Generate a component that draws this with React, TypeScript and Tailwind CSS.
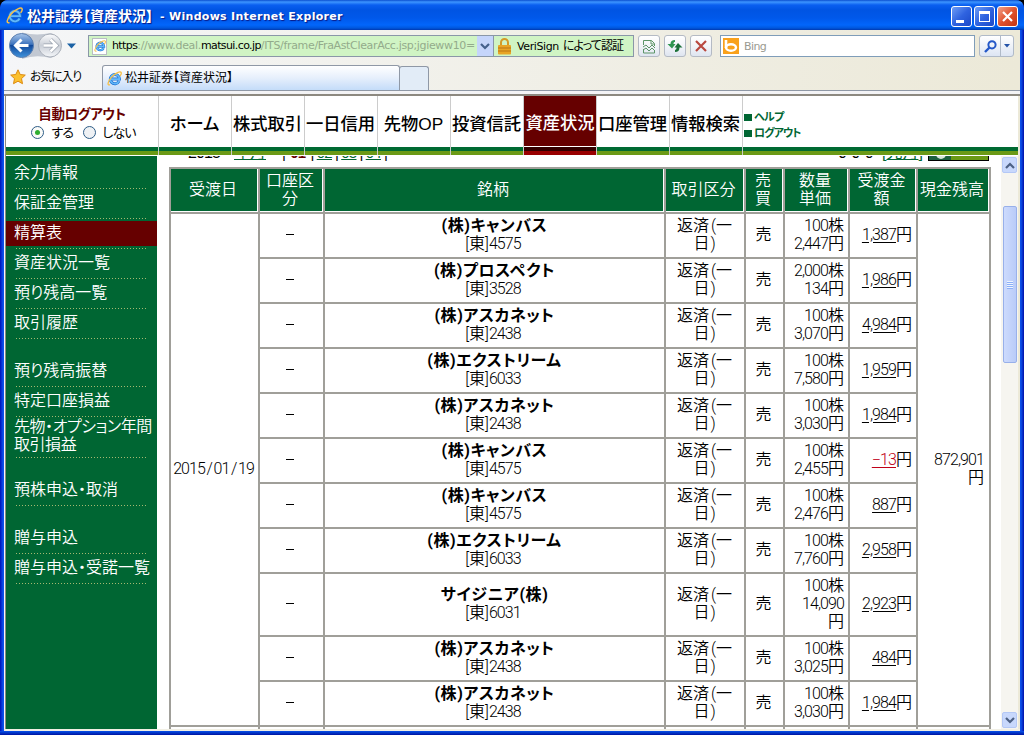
import { useState } from "react"

type Row = {
    name: string;
    code: string;
    qty: string;
    price: string;
    amount: string;
}

const rows: Row[] = [
    { name: "(株)キャンバス", code: "4575", qty: "100", price: "2,447", amount: "1,387" },
    { name: "(株)プロスペクト", code: "3528", qty: "2,000", price: "134", amount: "1,986" },
    { name: "(株)アスカネット", code: "2438", qty: "100", price: "3,070", amount: "4,984" },
    { name: "(株)エクストリーム", code: "6033", qty: "100", price: "7,580", amount: "1,959" },
    { name: "(株)アスカネット", code: "2438", qty: "100", price: "3,030", amount: "1,984" },
    { name: "(株)キャンバス", code: "4575", qty: "100", price: "2,455", amount: "−13" },
    { name: "(株)キャンバス", code: "4575", qty: "100", price: "2,476", amount: "887" },
    { name: "(株)エクストリーム", code: "6033", qty: "100", price: "7,760", amount: "2,958" },
    { name: "サイジニア(株)", code: "6031", qty: "100", price: "14,090", amount: "2,923" },
    { name: "(株)アスカネット", code: "2438", qty: "100", price: "3,025", amount: "484" },
    { name: "(株)アスカネット", code: "2438", qty: "100", price: "3,030", amount: "1,984" },
];

const menuGroups = [
    ["余力情報", "保証金管理", "精算表", "資産状況一覧", "預り残高一覧", "取引履歴"],
    ["預り残高振替", "特定口座損益", "先物・オプション年間\n取引損益"],
    ["預株申込・取消"],
    ["贈与申込", "贈与申込・受諾一覧"],
];

const navItems = ["ホーム", "株式取引", "一日信用", "先物OP", "投資信託", "資産状況", "口座管理", "情報検索"];

const Num = ({ children }: { children: string }) => (
    <span className="tracking-[-0.9px]">{children}</span>
)

const IeLogo = ({ size }: { size: number }) => (
    <svg width={size} height={size} viewBox="0 0 16 16" className="shrink-0">
        <path d="M12.8 10.8A4.9 4.9 0 1 1 13.300 8.600H4" fill="none" stroke="#1c6fd0" strokeWidth="3.200" />
        <path d="M12.8 10.8A4.9 4.9 0 1 1 13.300 8.600H4" fill="none" stroke="#62b8fa" strokeWidth="1.800" />
        <path d="M3.3 14.6C0 16 .6 11.400 4.600 6.800 8.800 2.200 14.500-.5 15.200 1.800c.3 1-.4 2.400-1.400 3.700" fill="none" stroke="#f5c04a" strokeWidth="1.400" />
    </svg>
)

const TitleBar = () => (
    <div className="h-[30px] shrink-0 flex items-center pl-[6px] pr-[6px] rounded-t-[7px] bg-[linear-gradient(#0b4fd0_0,#3d95ff_2px,#0a5ff0_5px,#0054e3_10px,#0058ea_18px,#0266fb_25px,#0057dd_28px,#0038b0_30px)]">
        <IeLogo size={17} />
        <div className="ml-1 pt-0.5 text-white font-bold leading-none whitespace-pre [text-shadow:1px_1px_1px_#0a1883] flex items-center">
            <span className="text-[14px] tracking-[0px]">松井証券【資産状況】</span>
            <span className="ml-[7px] tracking-[0.3px] text-[11px] font-['DejaVu_Sans']">- Windows Internet Explorer</span>
        </div>
        <div className="ml-auto flex gap-[2px] pt-[2px]">
            <div className="w-[21px] h-[21px] border border-white rounded-[3px] bg-linear-to-br from-[#6f9cf5] via-[#2f63e0] to-[#1b48c8] flex items-end pl-1 pb-[3px]">
                <div className="w-[8px] h-[3px] bg-white"></div>
            </div>
            <div className="w-[21px] h-[21px] border border-white rounded-[3px] bg-linear-to-br from-[#6f9cf5] via-[#2f63e0] to-[#1b48c8] flex items-center justify-center">
                <div className="w-[11px] h-[11px] border border-t-[3px] border-white"></div>
            </div>
            <div className="w-[21px] h-[21px] border border-white rounded-[3px] bg-linear-to-br from-[#f0a088] via-[#e0522c] to-[#c23410] flex items-center justify-center">
                <svg width="13" height="13" viewBox="0 0 13 13"><path d="M2 2l9 9M11 2l-9 9" stroke="#fff" strokeWidth="2.2" /></svg>
            </div>
        </div>
    </div>
)

const ToolButton = ({ children }: { children: React.ReactNode }) => (
    <div className="w-[22px] h-[22px] shrink-0 border border-[#b4bac4] rounded-[3px] bg-linear-to-b from-white via-[#f2f4f9] to-[#dfe5f0] flex items-center justify-center">{children}</div>
)

const NavButtons = () => (
    <svg width="76" height="30" viewBox="0 0 76 30" className="shrink-0">
        <defs>
            <linearGradient id="back" x1="0" y1="0" x2="0" y2="1">
                <stop offset="0" stopColor="#a9c6ea" />
                <stop offset=".45" stopColor="#3d73bd" />
                <stop offset=".5" stopColor="#124a9c" />
                <stop offset="1" stopColor="#3f93dc" />
            </linearGradient>
            <linearGradient id="fwd" x1="0" y1="0" x2="0" y2="1">
                <stop offset="0" stopColor="#fdfdfe" />
                <stop offset=".5" stopColor="#c9ced6" />
                <stop offset="1" stopColor="#f5f7fa" />
            </linearGradient>
        </defs>
        <path d="M17 1.500Q31 5 46 2a13 13 0 0 1 0 25Q31 23 17 28z" fill="#c2c8d2" />
        <circle cx="16.500" cy="14.500" r="12" fill="url(#back)" stroke="#5c7fb0" />
        <circle cx="45" cy="14.500" r="11.500" fill="url(#fwd)" stroke="#aab0ba" />
        <path d="M23.500 14.500H11M16.500 8.500l-6 6 6 6" fill="none" stroke="#fff" strokeWidth="3" />
        <path d="M38.500 14.500H51M45.500 8.500l6 6-6 6" fill="none" stroke="#9aa2ae" strokeWidth="4" />
        <path d="M38.500 14.500H51M45.500 8.500l6 6-6 6" fill="none" stroke="#fff" strokeWidth="2.600" />
        <path d="M62 12.500h9l-4.500 5z" fill="#1b62a5" />
    </svg>
)

const Toolbar = () => (
    <div className="h-[32px] shrink-0 flex items-center pl-[1px]">
        <NavButtons />
        <div className="ml-[7px] w-[389px] h-[22px] shrink-0 border border-r-0 border-[#8a97a8] bg-[#d0f4c4] flex items-center overflow-hidden">
            <div className="ml-[3px] mr-[5px] w-[15px] h-[17px] bg-white border border-[#b9bdc4] flex items-center justify-center shrink-0">
                <IeLogo size={12} />
            </div>
            <div className="whitespace-nowrap text-[11px] leading-[14px] text-[#93ab8b] font-['DejaVu_Sans'] tracking-[-0.34px]">
                <span className="text-black tracking-[-0.6px]">https</span>://www.deal.<span className="text-black tracking-[-0.6px]">matsui.co.jp</span>/ITS/frame/FraAstClearAcc.jsp;jgieww10=
            </div>
        </div>
        <div className="w-[16px] h-[22px] shrink-0 border-y border-[#8a97a8] bg-[#c5d5fb] flex items-center justify-center">
            <svg width="10" height="7" viewBox="0 0 10 7"><path d="M1 1l4 4 4-4" fill="none" stroke="#44608c" strokeWidth="2.200" /></svg>
        </div>
        <div className="w-[141px] h-[22px] shrink-0 border border-[#8a97a8] bg-[#d0f4c4] flex items-center pl-[4px]">
            <svg width="13" height="17" viewBox="0 0 13 17">
                <path d="M3 8V4.500a3.500 3.500 0 0 1 7 0V8" fill="none" stroke="#d39a28" strokeWidth="2" />
                <rect y="7" width="13" height="9.500" rx="1" fill="#e8a526" />
                <path d="M0 10h13M0 13h13" stroke="#bb7412" />
            </svg>
            <span className="ml-[6px] text-[12px] leading-none whitespace-nowrap"><span className="font-['DejaVu_Sans'] text-[11px] tracking-[-0.4px]">VeriSign</span><span className="ml-[4px] tracking-[-0.9px]">によって認証</span></span>
        </div>
        <div className="ml-1 flex gap-1">
            <ToolButton>
                <svg width="14" height="15" viewBox="0 0 14 15" fill="none" stroke="#5c9568">
                    <path d="M1.500 6V1.500h8l3 3V7M9 1.500V5h3M1.500 10v4h11v-3" />
                    <path d="M1 8l3-2 3 3 3-3 3 3M1 11l3-2 3 3 3-3 3 3" />
                </svg>
            </ToolButton>
            <ToolButton>
                <svg width="16" height="14" viewBox="0 0 16 14">
                    <path d="M8 1C5 1 3.500 2.500 3.500 5H.5l4.500 4.500L8.500 5h-2c0-1.500.3-2 1.500-2z" fill="#2f9550" />
                    <path d="M8 13c3 0 4.500-1.500 4.500-4.500h3L11 4 7.500 8.500h2c0 1.500-.3 2.300-1.500 2.300z" fill="#1b7038" />
                </svg>
            </ToolButton>
            <ToolButton>
                <svg width="12" height="12" viewBox="0 0 12 12"><path d="M1 1l10 10M11 1L1 11" stroke="#b94840" strokeWidth="2.200" /></svg>
            </ToolButton>
        </div>
        <div className="ml-[8px] w-[255px] h-[22px] shrink-0 border border-[#7f9db9] bg-white flex items-center pl-[2px]">
            <svg width="16" height="16" viewBox="0 0 16 16">
                <rect width="16" height="16" fill="#f9a11b" />
                <path d="M3 2v8" stroke="#fff" strokeWidth="2.600" />
                <ellipse cx="8" cy="9.500" rx="5" ry="3.200" fill="none" stroke="#fff" strokeWidth="2.400" />
            </svg>
            <span className="ml-[5px] text-[11px] leading-[13px] text-[#9a9a90] font-['DejaVu_Sans'] tracking-[-0.6px]">Bing</span>
        </div>
        <div className="ml-1 h-[22px] w-[35px] shrink-0 flex border border-[#b0bac8] rounded-[3px] bg-linear-to-b from-white to-[#dde5f3]">
            <div className="w-[21px] border-r border-[#b0bac8] flex items-center justify-center">
                <svg width="13" height="13" viewBox="0 0 13 13" fill="none" stroke="#2458c8" strokeWidth="2">
                    <circle cx="8" cy="4.800" r="3.600" />
                    <path d="M5.500 7.500L1 12" strokeWidth="2.400" />
                </svg>
            </div>
            <div className="flex-1 flex items-center justify-center">
                <svg width="6" height="4" viewBox="0 0 6 4"><path d="M0 0h6L3 3.500z" fill="#2352a8" /></svg>
            </div>
        </div>
    </div>
)

const TabBar = () => (
    <div className="h-[29px] shrink-0 flex items-end border-b border-[#8f98a6]">
        <div className="w-[98px] h-[27px] flex items-center pl-[6px]">
            <svg width="16" height="16" viewBox="0 0 16 16"><path d="M8 .8l2.200 4.700 5.100.6-3.800 3.500 1 5.100L8 12.200l-4.500 2.500 1-5.100L.7 6.100l5.100-.6z" fill="#fbc02e" stroke="#dc8a12" /></svg>
            <span className="ml-[4px] text-[12px] leading-none whitespace-nowrap tracking-[-1.2px]">お気に入り</span>
        </div>
        <div className="w-[298px] h-[25px] rounded-t-[3px] border border-b-0 border-[#8f98a6] bg-linear-to-b from-white via-[#e6effc] to-[#c4dcf9] flex items-center pl-1">
            <IeLogo size={15} />
            <span className="ml-[3px] text-[12px] leading-none whitespace-nowrap tracking-[0px]">松井証券【資産状況】</span>
        </div>
        <div className="w-[30px] h-[24px] -ml-px rounded-t-[3px] border border-b-0 border-[#8f98a6] bg-[#e2ecf7]"></div>
    </div>
)

const SiteHeader = ({ logout, setLogout }: { logout: boolean; setLogout: (v: boolean) => void }) => (
    <div className="h-[60px] shrink-0 flex border-b border-white bg-[linear-gradient(#fff_0_51px,#006a32_51px_55px,#6b9a16_55px_59px)]">
        <div className="w-[152px] shrink-0 flex flex-col items-center pt-[11px]">
            <div className="text-[13.5px] leading-[16px] font-bold text-[#660000] tracking-[-0.4px]">自動ログアウト</div>
            <div className="mt-px ml-[3px] flex items-center text-[13px] leading-[17px]">
                <span onClick={() => setLogout(true)} className="w-[13px] h-[13px] rounded-full border border-[#2d5c86] bg-[#fbfbf8] flex items-center justify-center">
                    {logout && <i className="w-[5px] h-[5px] rounded-full bg-[#2fae2f]"></i>}
                </span>
                <span className="ml-[7px] w-[32px] tracking-[-0.8px]">する</span>
                <span onClick={() => setLogout(false)} className="w-[13px] h-[13px] rounded-full border border-[#2d5c86] bg-[#eef1f4] flex items-center justify-center">
                    {!logout && <i className="w-[5px] h-[5px] rounded-full bg-[#2fae2f]"></i>}
                </span>
                <span className="ml-[6px] tracking-[-0.9px]">しない</span>
            </div>
        </div>
        {navItems.map((item) => (
            <div
                key={item}
                className={item === "資産状況"
                    ? "w-[73px] shrink-0 border-l border-[#ccc] text-white flex justify-center pt-[16px] bg-[linear-gradient(#660000_0_50px,#fff_50px_51px,#330000_51px_55px,#990000_55px_59px)]"
                    : "w-[73px] shrink-0 border-l border-[#ccc] flex justify-center pt-[17px] pr-px"}
            >
                <span className="text-[17.3px] leading-[22px] font-medium whitespace-nowrap">{item}</span>
            </div>
        ))}
        <div className="border-l border-[#ccc] pl-px pt-[13px] text-[11px] leading-[16px] font-bold text-[#006633]">
            <div className="flex items-center"><i className="w-2 h-[7px] bg-[#006633] mr-[2px]"></i><span className="tracking-[-0.7px]">ヘルプ</span></div>
            <div className="flex items-center"><i className="w-2 h-[7px] bg-[#006633] mr-[2px]"></i><span className="tracking-[-1px]">ログアウト</span></div>
        </div>
    </div>
)

const Sidebar = () => (
    <div className="w-[151px] shrink-0 bg-[#006633] text-white font-[350] pt-[3px] flex flex-col gap-[18px]">
        {menuGroups.map((group, g) => (
            <div key={g}>
                {group.map((item) => (
                    <div key={item} className={item.includes("\n") ? "h-[41px] flex flex-col" : "h-[30px] pt-[2px] flex flex-col"}>
                        <div className={item === "精算表" ? "h-[25px] bg-[#660000] pl-[8px] text-[16px] leading-[23px]" : "grow pl-[8px] text-[16px] leading-[23px]"}>
                            {item.includes("\n")
                                ? <div className="whitespace-pre leading-[18px] tracking-[-0.45px] pt-px">{item}</div>
                                : <div className="whitespace-nowrap">{item}</div>}
                        </div>
                        <div className="mt-auto ml-[10px] w-[131px] h-px shrink-0 bg-[repeating-linear-gradient(90deg,#a5b871_0_1px,transparent_1px_3px)]"></div>
                    </div>
                ))}
            </div>
        ))}
    </div>
)

const cell = "border-l-2 border-t-2 border-[#a09f99] flex items-center text-[16px] leading-[18px] pb-[2px]"
const head = "bg-[#006633] text-white border-l-2 border-t-2 border-[#a09f99] shadow-[inset_-1px_-1px_#fff] flex items-center justify-center text-center text-[16px] leading-[18px] pb-[2px] pr-[3px]"

const ClippedPager = () => (
    <div className="h-[11px] flex items-start overflow-hidden text-[16px]">
        <div className="flex -mt-[14px] leading-[22px] w-full h-[23px]">
            <span className="ml-[19px] w-[46px] tracking-[-0.9px]">2015</span>
            <span className="w-[48px] text-[#006633] underline underline-offset-1">年月</span>
            <span className="w-[98px] text-[15px] whitespace-nowrap tracking-[-0.7px] text-black">|<b className="mx-[5px] text-[#660000]">01</b>|<u className="mx-[3px] text-[#006633]">02</u>|<u className="mx-[3px] text-[#006633]">03</u>|<u className="mx-[3px] text-[#006633]">04</u>|</span>
            <span className="ml-[458px] w-[44px] whitespace-nowrap">0 0 0</span>
            <span className="text-[#006633] whitespace-nowrap w-[46px]">[<u>先月</u>]</span>
            <span className="w-[61px] h-[19px] border border-black bg-[#6b9a16] flex items-end justify-start"><i className="w-[22px] h-full bg-[#1c6040] flex items-end pl-[7px] pb-px"><i className="w-[10px] h-[12px] rounded-b-full bg-[#d8e6da]"></i></i></span>
        </div>
    </div>
)

const Statement = () => (
    <div className="w-[822px] ml-3 shrink-0 border-r-2 border-[#a09f99] mb-[2px] font-[350] font-['Roboto','Noto_Sans_CJK_JP',sans-serif]">
        <div className="grid grid-cols-[89px_65px_341px_80px_39px_65px_68px_73px] grid-rows-[45px]">
            <div className={head}>受渡日</div>
            <div className={head}>口座区<br />分</div>
            <div className={head}>銘柄</div>
            <div className={head}>取引区分</div>
            <div className={head}>売<br />買</div>
            <div className={head}>数量<br />単価</div>
            <div className={head}>受渡金<br />額</div>
            <div className={head}>現金残高</div>
        </div>
        <div className="flex h-[513px]">
            <div className={cell + " w-[89px] justify-center"}><span className="tracking-[-0.9px] pr-[2px]">2015<span className="px-[1.5px]">/</span>01<span className="px-[1.5px]">/</span>19</span></div>
            <div className="w-[658px]">
                {rows.map((row, i) => (
                    <div key={i} className={row.price.length > 5 ? "h-[63px] grid grid-cols-[65px_341px_80px_39px_65px_68px]" : "h-[45px] grid grid-cols-[65px_341px_80px_39px_65px_68px]"}>
                        <div className={cell + " justify-center pr-[3px]"}><i className="w-[8px] h-px bg-black"></i></div>
                        <div className={cell + " flex-col justify-center"}>
                            <span className="font-bold text-[16px] tracking-[0.6px]">{row.name}</span>
                            <span className="pr-[3px]">[東]<Num>{row.code}</Num></span>
                        </div>
                        <div className={cell + " justify-center text-center pr-px"}><div>返済<span className="pl-[2px]">(</span>一<br />日<span className="pl-px">)</span></div></div>
                        <div className={cell + " justify-center pr-[2px]"}>売</div>
                        <div className={cell + " justify-end text-right pr-[4px]"}>
                            <div>
                                <div><Num>{row.qty}</Num>株</div>
                                <div><Num>{row.price}</Num>{row.price.length > 5 && <br />}円</div>
                            </div>
                        </div>
                        <div className={cell + " justify-end pr-[4px]"}>
                            <u className={row.amount === "−13" ? "text-[#c00018] tracking-[-0.9px] underline-offset-2" : "tracking-[-0.9px] underline-offset-2"}>{row.amount}</u>円
                        </div>
                    </div>
                ))}
            </div>
            <div className={cell + " w-[73px] justify-end text-right pr-[5px]"}><div><Num>872,901</Num><br />円</div></div>
        </div>
        <div className="h-[4px] grid grid-cols-[89px_65px_341px_80px_39px_65px_68px_73px]">
            {[0, 1, 2, 3, 4, 5, 6, 7].map((n) => <div key={n} className="border-l-2 border-t-2 border-[#a09f99]"></div>)}
        </div>
    </div>
)

const ScrollBar = () => (
    <div className="ml-auto w-[17px] shrink-0 bg-[#f6f5f0] flex flex-col items-center pt-px pb-px">
        <div className="w-[15px] h-[16px] rounded-[2px] border border-[#b4c8f6] bg-[#c8d8fc] flex items-center justify-center">
            <svg width="10" height="7" viewBox="0 0 10 7"><path d="M1 6l4-4 4 4" fill="none" stroke="#4d6185" strokeWidth="2.200" /></svg>
        </div>
        <div className="mt-[33px] w-[14px] h-[157px] rounded-[2px] border border-[#98b0ea] bg-linear-to-r from-[#cddbfd] to-[#b9cbf8] flex flex-col items-center justify-center gap-px">
            {[0, 1, 2, 3].map((n) => <i key={n} className="w-[6px] h-px bg-[#eef4fe] shadow-[0_1px_#8cb0f8]"></i>)}
        </div>
        <div className="mt-auto w-[15px] h-[16px] rounded-[2px] border border-[#b4c8f6] bg-[#c8d8fc] flex items-center justify-center">
            <svg width="10" height="7" viewBox="0 0 10 7"><path d="M1 1l4 4 4-4" fill="none" stroke="#4d6185" strokeWidth="2.200" /></svg>
        </div>
    </div>
)

const App = () => {
    const [logout, setLogout] = useState(true);

    return (
        <div className="w-[1024px] h-[735px] overflow-hidden bg-black text-black font-['Liberation_Sans','Noto_Sans_CJK_JP',sans-serif] [font-feature-settings:'palt']">
            <div className="w-full h-full flex flex-col rounded-t-[8px] overflow-hidden bg-[linear-gradient(90deg,#0010b8_0,#0b50ea_3px,#0b50ea_1021px,#0010a8_1024px)]">
                <TitleBar />
                <div className="mx-[4px] h-[701px] flex flex-col bg-linear-to-r from-[#f5f6f8] to-[#ece9d8]">
                    <Toolbar />
                    <TabBar />
                    <div className="h-[5px] shrink-0 bg-[#f3f3f5] border-b-2 border-[#8d8980]"></div>
                    <div className="ml-[1px] border-l border-[#8d8980] mr-[2px] grow min-h-0 flex flex-col bg-white">
                        <SiteHeader logout={logout} setLogout={setLogout} />
                        <div className="grow flex min-h-0">
                            <Sidebar />
                            <div className="grow min-w-0 flex overflow-hidden">
                                <div className="overflow-hidden">
                                    <div className="pl-[12px]"><ClippedPager /></div>
                                    <Statement />
                                </div>
                                <ScrollBar />
                            </div>
                        </div>
                    </div>
                    <div className="h-[2px] shrink-0 bg-[#f1efe4]"></div>
                </div>
                <div className="grow bg-linear-to-b from-[#0b50ea] to-[#0010a0]"></div>
            </div>
        </div>
    )
}

export default App
